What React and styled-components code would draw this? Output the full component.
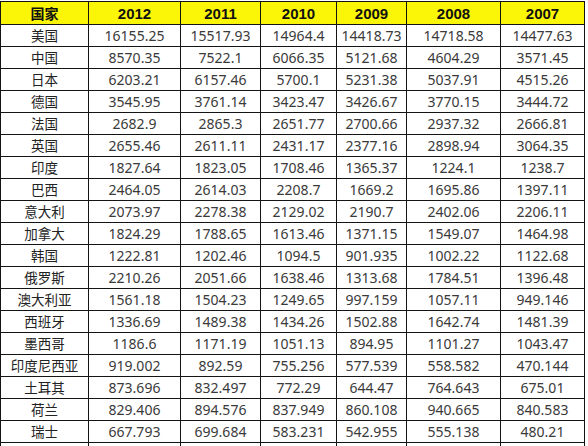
import React from "react";
import styled, { createGlobalStyle } from "styled-components";

const Global = createGlobalStyle`
  html, body { margin: 0; padding: 0; background: #fff; }
  body { font-family: "Noto Sans", "Noto Sans CJK SC", sans-serif; }
  #root { width: 588px; height: 446px; overflow: hidden; }
`;

const Page = styled.div`
  width: 588px;
  height: 446px;
  overflow: hidden;
  padding-top: 1px;
  box-sizing: border-box;
`;

const Table = styled.table`
  border-collapse: collapse;
  table-layout: fixed;
  width: 585px;
`;

const HeadCell = styled.th`
  background: #fbf507;
  border: 1px solid #141414;
  height: 22px;
  padding: 0;
  text-align: center;
  vertical-align: middle;
  font-family: ${(p) => (p.$cjk ? '"Noto Sans CJK SC", sans-serif' : '"Liberation Sans", Arial, sans-serif')};
  font-weight: 700;
  font-size: ${(p) => (p.$cjk ? "14px" : "15px")};
  color: #111;
  line-height: 1;
`;

const Cell = styled.td`
  border: 1px solid #141414;
  height: 21px;
  padding: 0;
  text-align: center;
  vertical-align: middle;
  font-family: ${(p) => (p.$cjk ? '"Noto Sans CJK SC", sans-serif' : '"Noto Sans", "Noto Sans CJK SC", sans-serif')};
  font-size: ${(p) => (p.$cjk ? "13.5px" : "14px")};
  color: ${(p) => (p.$cjk ? "#222" : "#3a3a3a")};
  line-height: 1;
  white-space: nowrap;
`;

const widths = [88, 92, 80, 76, 70, 94, 84];
const years = ["2012", "2011", "2010", "2009", "2008", "2007"];

const rows = [
  ["美国", "16155.25", "15517.93", "14964.4", "14418.73", "14718.58", "14477.63"],
  ["中国", "8570.35", "7522.1", "6066.35", "5121.68", "4604.29", "3571.45"],
  ["日本", "6203.21", "6157.46", "5700.1", "5231.38", "5037.91", "4515.26"],
  ["德国", "3545.95", "3761.14", "3423.47", "3426.67", "3770.15", "3444.72"],
  ["法国", "2682.9", "2865.3", "2651.77", "2700.66", "2937.32", "2666.81"],
  ["英国", "2655.46", "2611.11", "2431.17", "2377.16", "2898.94", "3064.35"],
  ["印度", "1827.64", "1823.05", "1708.46", "1365.37", "1224.1", "1238.7"],
  ["巴西", "2464.05", "2614.03", "2208.7", "1669.2", "1695.86", "1397.11"],
  ["意大利", "2073.97", "2278.38", "2129.02", "2190.7", "2402.06", "2206.11"],
  ["加拿大", "1824.29", "1788.65", "1613.46", "1371.15", "1549.07", "1464.98"],
  ["韩国", "1222.81", "1202.46", "1094.5", "901.935", "1002.22", "1122.68"],
  ["俄罗斯", "2210.26", "2051.66", "1638.46", "1313.68", "1784.51", "1396.48"],
  ["澳大利亚", "1561.18", "1504.23", "1249.65", "997.159", "1057.11", "949.146"],
  ["西班牙", "1336.69", "1489.38", "1434.26", "1502.88", "1642.74", "1481.39"],
  ["墨西哥", "1186.6", "1171.19", "1051.13", "894.95", "1101.27", "1043.47"],
  ["印度尼西亚", "919.002", "892.59", "755.256", "577.539", "558.582", "470.144"],
  ["土耳其", "873.696", "832.497", "772.29", "644.47", "764.643", "675.01"],
  ["荷兰", "829.406", "894.576", "837.949", "860.108", "940.665", "840.583"],
  ["瑞士", "667.793", "699.684", "583.231", "542.955", "555.138", "480.21"],
  ["", "", "", "", "", "", ""],
];

export default function App() {
  return (
    <>
      <Global />
      <Page>
        <Table>
          <colgroup>
            {widths.map((w, i) => (
              <col key={i} style={{ width: w }} />
            ))}
          </colgroup>
          <thead>
            <tr>
              <HeadCell $cjk>国家</HeadCell>
              {years.map((y) => (
                <HeadCell key={y}>{y}</HeadCell>
              ))}
            </tr>
          </thead>
          <tbody>
            {rows.map((r, i) => (
              <tr key={i}>
                {r.map((v, j) => (
                  <Cell key={j} $cjk={j === 0}>
                    {v}
                  </Cell>
                ))}
              </tr>
            ))}
          </tbody>
        </Table>
      </Page>
    </>
  );
}
